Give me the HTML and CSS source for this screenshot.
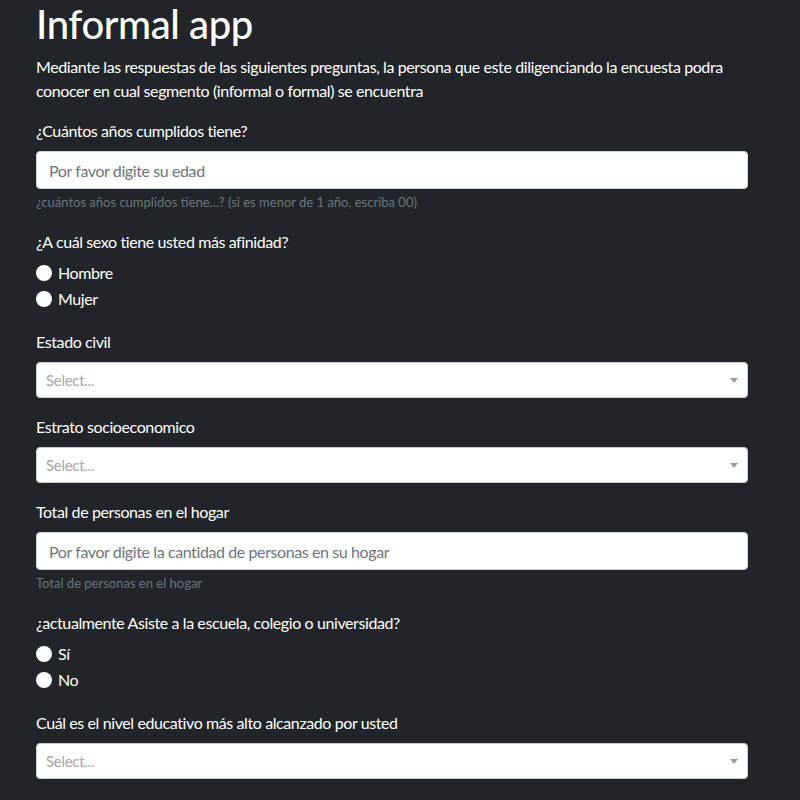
FILE: index.html
```html
<!DOCTYPE html>
<html lang="es">
<head>
<meta charset="utf-8">
<title>Informal app</title>
<link rel="stylesheet" href="styles.css">
</head>
<body>
<main class="container">
  <h1 class="title">Informal app</h1>
  <p class="lead">Mediante las respuestas de las siguientes preguntas, la persona que este diligenciando la encuesta podra conocer en cual segmento (informal o formal) se encuentra</p>

  <div class="group">
    <label class="label">¿Cuántos años cumplidos tiene?</label>
    <input class="input" type="text" placeholder="Por favor digite su edad">
    <small class="help">¿cuántos años cumplidos tiene...? (si es menor de 1 año, escriba 00)</small>
  </div>

  <div class="group group-radio">
    <div class="label label-radio">¿A cuál sexo tiene usted más afinidad?</div>
    <div class="check"><span class="dot"></span><span>Hombre</span></div>
    <div class="check"><span class="dot"></span><span>Mujer</span></div>
  </div>

  <div class="group group-select">
    <div class="label">Estado civil</div>
    <div class="select"><span class="placeholder">Select...</span><span class="arrow"></span></div>
  </div>

  <div class="group group-select">
    <div class="label">Estrato socioeconomico</div>
    <div class="select"><span class="placeholder">Select...</span><span class="arrow"></span></div>
  </div>

  <div class="group">
    <label class="label">Total de personas en el hogar</label>
    <input class="input" type="text" placeholder="Por favor digite la cantidad de personas en su hogar">
    <small class="help">Total de personas en el hogar</small>
  </div>

  <div class="group group-radio">
    <div class="label label-radio">¿actualmente Asiste a la escuela, colegio o universidad?</div>
    <div class="check"><span class="dot"></span><span>Sí</span></div>
    <div class="check"><span class="dot"></span><span>No</span></div>
  </div>

  <div class="group group-select">
    <div class="label">Cuál es el nivel educativo más alto alcanzado por usted</div>
    <div class="select"><span class="placeholder">Select...</span><span class="arrow"></span></div>
  </div>
</main>
</body>
</html>
```

FILE: styles.css
```css
html, body {
  margin: 0;
  padding: 0;
  background: #212529;
}

body {
  font-family: Lato, "Noto Sans", sans-serif;
  font-size: 16px;
  line-height: 24px;
  letter-spacing: -0.4px;
  color: #ffffff;
}

.container {
  width: 712px;
  padding: 0 0 0 36px;
}

.title {
  margin: 0 0 8px 0;
  padding-top: 1px;
  font-size: 40px;
  line-height: 46px;
  font-weight: 500;
  letter-spacing: -0.4px;
}

.lead {
  margin: 0 0 16px 0;
}

.group {
  display: flex;
  flex-direction: column;
  margin-bottom: 17px;
}

.group-radio {
  margin-bottom: 18px;
}

.group-select {
  margin-bottom: 17px;
}

.label {
  display: block;
  margin-bottom: 8px;
}

.label-radio {
  margin-bottom: 6px;
}

.input {
  box-sizing: border-box;
  height: 38px;
  width: 100%;
  margin: 0;
  padding: 6px 12px;
  border: 1px solid #ced4da;
  border-radius: 4px;
  background: #ffffff;
  font-family: inherit;
  font-size: 16px;
  letter-spacing: -0.4px;
  color: #495057;
  outline: none;
}

.input::placeholder {
  color: #6c757d;
  opacity: 1;
}

.help {
  margin-top: 3px;
  font-size: 13px;
  line-height: 21px;
  letter-spacing: 0;
  color: #6c757d;
}

.check {
  display: flex;
  align-items: center;
  gap: 6px;
  height: 26px;
}

.dot {
  width: 16px;
  height: 16px;
  border-radius: 50%;
  background: #ffffff;
  flex: none;
}

.select {
  box-sizing: border-box;
  height: 36px;
  display: flex;
  align-items: center;
  justify-content: space-between;
  padding: 0 9px 0 9px;
  border: 1px solid #cccccc;
  border-radius: 4px;
  background: #ffffff;
}

.placeholder {
  color: #a6a6a6;
  font-size: 15px;
  letter-spacing: -0.3px;
}

.arrow {
  width: 0;
  height: 0;
  margin-top: 1px;
  border-left: 4px solid transparent;
  border-right: 4px solid transparent;
  border-top: 5px solid #999999;
}
```
